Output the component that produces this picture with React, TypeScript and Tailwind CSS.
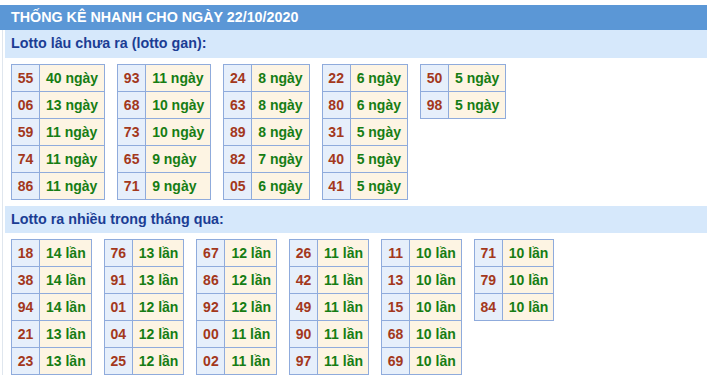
import React from "react";

type Row = [string, string];

const gan: Row[][] = [
  [["55", "40 ngày"], ["06", "13 ngày"], ["59", "11 ngày"], ["74", "11 ngày"], ["86", "11 ngày"]],
  [["93", "11 ngày"], ["68", "10 ngày"], ["73", "10 ngày"], ["65", "9 ngày"], ["71", "9 ngày"]],
  [["24", "8 ngày"], ["63", "8 ngày"], ["89", "8 ngày"], ["82", "7 ngày"], ["05", "6 ngày"]],
  [["22", "6 ngày"], ["80", "6 ngày"], ["31", "5 ngày"], ["40", "5 ngày"], ["41", "5 ngày"]],
  [["50", "5 ngày"], ["98", "5 ngày"]],
];

const nhieu: Row[][] = [
  [["18", "14 lần"], ["38", "14 lần"], ["94", "14 lần"], ["21", "13 lần"], ["23", "13 lần"]],
  [["76", "13 lần"], ["91", "13 lần"], ["01", "12 lần"], ["04", "12 lần"], ["25", "12 lần"]],
  [["67", "12 lần"], ["86", "12 lần"], ["92", "12 lần"], ["00", "11 lần"], ["02", "11 lần"]],
  [["26", "11 lần"], ["42", "11 lần"], ["49", "11 lần"], ["90", "11 lần"], ["97", "11 lần"]],
  [["11", "10 lần"], ["13", "10 lần"], ["15", "10 lần"], ["68", "10 lần"], ["69", "10 lần"]],
  [["71", "10 lần"], ["79", "10 lần"], ["84", "10 lần"]],
];

function Tbl({ rows, tight }: { rows: Row[]; tight?: boolean }) {
  return (
    <table className="border-collapse border border-[#8fabdc] self-start">
      <tbody>
        {rows.map(([n, t], i) => (
          <tr key={i} className="h-[27px]">
            <td className="border border-[#8fabdc] bg-[#e6effb] text-[#a3381c] px-0 w-[28px] text-center leading-[17px]">{n}</td>
            <td
              className={
                tight
                  ? "border border-[#8fabdc] bg-[#fdf4e3] text-[#167d14] pl-[6px] pr-[5px] leading-[17px] whitespace-nowrap"
                  : "border border-[#8fabdc] bg-[#fdf4e3] text-[#167d14] pl-[6px] pr-[6px] leading-[17px] whitespace-nowrap"
              }
            >
              {t}
            </td>
          </tr>
        ))}
      </tbody>
    </table>
  );
}

export default function App() {
  return (
    <div className="w-[708px] h-[375px] bg-white pt-[5px] font-['Liberation_Sans',Arial,sans-serif] font-bold text-[14px] overflow-hidden">
      <div className="h-[25px] bg-[#5b97d6] text-white flex items-center pl-[11px] text-[14.3px] mr-[1px]">
        THỐNG KÊ NHANH CHO NGÀY 22/10/2020
      </div>
      <div className="ml-[2px] border-l border-[#dfe6ee] pl-[2px] mr-[1px]">
        <div className="h-[28px] bg-[#d6e8fb] text-[#1b3d94] flex items-center pl-[6px] text-[14.3px]">
          Lotto lâu chưa ra (lotto gan):
        </div>
        <div className="flex gap-[12px] pl-[6px] pt-[6px] pb-[6px]">
          {gan.map((r, i) => (
            <Tbl key={i} rows={r} />
          ))}
        </div>
        <div className="h-[27px] bg-[#d6e8fb] text-[#1b3d94] flex items-center pl-[6px] text-[14.3px]">
          Lotto ra nhiều trong tháng qua:
        </div>
        <div className="flex gap-[12px] pl-[6px] pt-[6px]">
          {nhieu.map((r, i) => (
            <Tbl key={i} rows={r} tight />
          ))}
        </div>
      </div>
    </div>
  );
}
